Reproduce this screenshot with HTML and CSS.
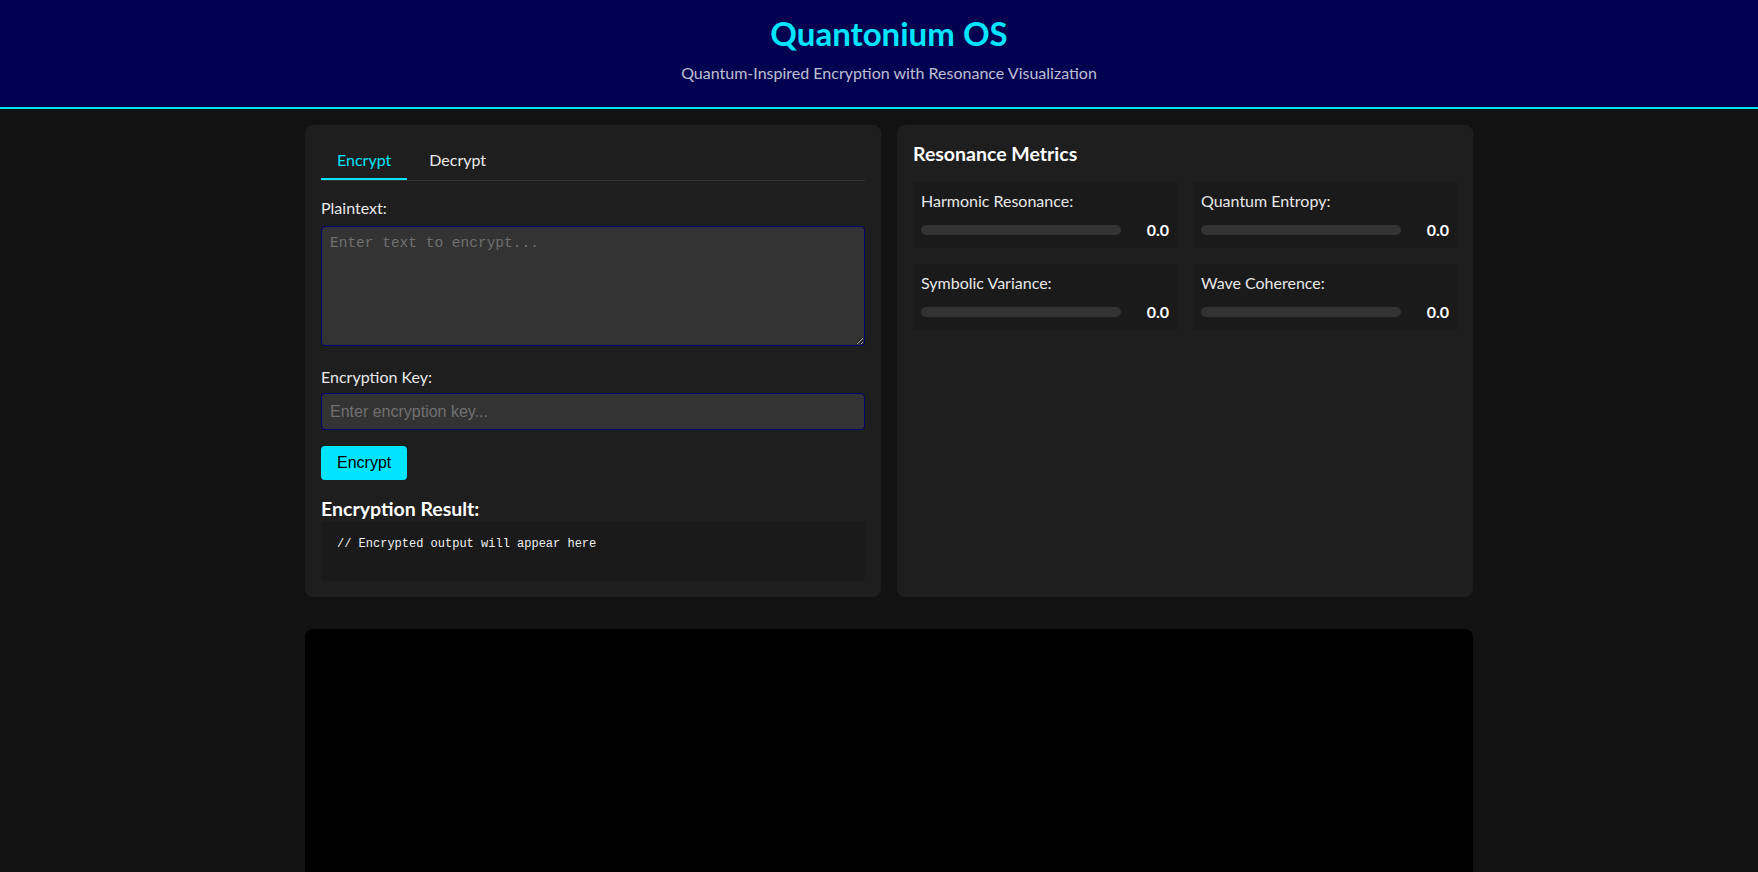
FILE: index.html
```html
<!DOCTYPE html>
<html lang="en">
<head>
<meta charset="utf-8">
<title>Quantonium OS</title>
<link rel="stylesheet" href="styles.css">
</head>
<body>
<header class="app-header">
  <h1 class="app-title">Quantonium OS</h1>
  <p class="app-subtitle">Quantum-Inspired Encryption with Resonance Visualization</p>
</header>
<main class="container">
  <div class="panels">
    <section class="panel">
      <div class="tabs">
        <button class="tab active">Encrypt</button>
        <button class="tab">Decrypt</button>
      </div>
      <div class="form-group form-group--text">
        <label class="field-label" for="plaintext">Plaintext:</label>
        <textarea id="plaintext" class="text-area" placeholder="Enter text to encrypt..."></textarea>
      </div>
      <div class="form-group">
        <label class="field-label field-label--tight" for="key">Encryption Key:</label>
        <input id="key" class="text-input" type="text" placeholder="Enter encryption key...">
      </div>
      <button class="btn">Encrypt</button>
      <div class="result">
        <h3 class="section-title">Encryption Result:</h3>
        <div class="result-box">// Encrypted output will appear here</div>
      </div>
    </section>
    <section class="panel">
      <h3 class="section-title metrics-title">Resonance Metrics</h3>
      <div class="metrics">
        <div class="metric">
          <div class="metric-label">Harmonic Resonance:</div>
          <div class="metric-row"><div class="bar"><div class="bar-fill" style="width:0%"></div></div><span class="metric-value">0.0</span></div>
        </div>
        <div class="metric">
          <div class="metric-label">Quantum Entropy:</div>
          <div class="metric-row"><div class="bar"><div class="bar-fill" style="width:0%"></div></div><span class="metric-value">0.0</span></div>
        </div>
        <div class="metric">
          <div class="metric-label">Symbolic Variance:</div>
          <div class="metric-row"><div class="bar"><div class="bar-fill" style="width:0%"></div></div><span class="metric-value">0.0</span></div>
        </div>
        <div class="metric">
          <div class="metric-label">Wave Coherence:</div>
          <div class="metric-row"><div class="bar"><div class="bar-fill" style="width:0%"></div></div><span class="metric-value">0.0</span></div>
        </div>
      </div>
    </section>
  </div>
  <div class="canvas-box"></div>
</main>
</body>
</html>
```
FILE: styles.css
```css
* { box-sizing: border-box; }

body {
  margin: 0;
  background: #121212;
  color: #e8e8e8;
  font-family: Lato, "Open Sans", sans-serif;
  font-size: 16px;
  line-height: 1.33;
}

.app-header {
  height: 109px;
  background: #000050;
  border-bottom: 2px solid #00e5ff;
  padding: 12px 0 0 20px;
  text-align: center;
}

.app-title {
  margin: 0;
  font-size: 33px;
  font-weight: 700;
  line-height: 1.3;
  color: #00e5ff;
}

.app-subtitle {
  margin: 7px 0 0;
  font-size: 16px;
  color: rgba(255, 255, 255, 0.75);
}

.container {
  max-width: 1188px;
  margin: 0 auto;
  padding: 16px 0 0 20px;
}

.panels {
  display: grid;
  grid-template-columns: 1fr 1fr;
  gap: 16px;
}

.panel {
  background: #1e1e1e;
  border-radius: 8px;
  padding: 16px;
}

.tabs {
  display: flex;
  gap: 6px;
  border-bottom: 1px solid #333;
  margin-bottom: 16px;
}

.tab {
  background: none;
  border: none;
  border-bottom: 2px solid transparent;
  color: #eaeaea;
  font-family: inherit;
  font-size: 16px;
  line-height: 21px;
  padding: 8px 16px;
}

.tab.active {
  color: #00e5ff;
  border-bottom-color: #00e5ff;
}

.form-group { margin-bottom: 16px; }
.form-group--text { margin-bottom: 20px; }

.field-label {
  display: block;
  margin-bottom: 8px;
  line-height: 21px;
}

.field-label--tight { margin-bottom: 6px; }

.text-area {
  display: block;
  width: 100%;
  height: 120px;
  margin: 0;
  padding: 8px;
  background: #333;
  border: 1px solid #00006e;
  border-radius: 4px;
  color: #eee;
  font-family: "Liberation Mono", monospace;
  font-size: 14.5px;
}

.text-input {
  display: block;
  width: 100%;
  padding: 8px;
  background: #333;
  border: 1px solid #00006e;
  border-radius: 4px;
  color: #eee;
  font-family: "Liberation Sans", Arial, sans-serif;
  font-size: 16px;
  line-height: 19px;
}

.text-area::placeholder,
.text-input::placeholder { color: #707070; }

.btn {
  display: block;
  background: #00e5ff;
  color: #000;
  border: none;
  border-radius: 4px;
  padding: 8px 16px;
  font-family: "Liberation Sans", Arial, sans-serif;
  font-size: 16px;
  line-height: 18px;
}

.result { margin-top: 16px; }

.section-title {
  margin: 0;
  font-size: 19.5px;
  font-weight: 700;
  line-height: 25px;
  color: #fff;
}

.metrics-title { margin-bottom: 16px; }

.result-box {
  min-height: 60px;
  padding: 16px;
  background: #1a1a1a;
  border-radius: 4px;
  font-family: "Liberation Mono", monospace;
  font-size: 12px;
  color: #f0f0f0;
}

.metrics {
  display: grid;
  grid-template-columns: 1fr 1fr;
  gap: 16px;
}

.metric {
  background: #1a1a1a;
  border-radius: 4px;
  padding: 8px;
}

.metric-label {
  line-height: 21px;
  margin-bottom: 8px;
}

.metric-row {
  display: flex;
  align-items: center;
  gap: 8px;
}

.bar {
  flex: 1;
  height: 10px;
  background: #333;
  border-radius: 5px;
  overflow: hidden;
}

.bar-fill {
  height: 100%;
  background: #00e5ff;
}

.metric-value {
  width: 40px;
  text-align: right;
  font-weight: 700;
  color: #fff;
  line-height: 21px;
}

.canvas-box {
  margin-top: 32px;
  height: 500px;
  background: #000;
  border-radius: 8px;
}
```
